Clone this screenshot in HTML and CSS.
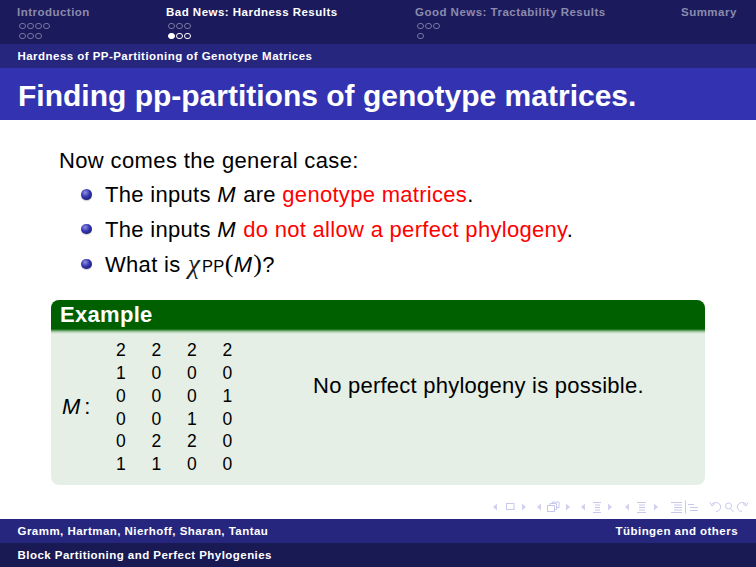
FILE: index.html
```html
<!DOCTYPE html>
<html lang="en">
<head>
<meta charset="utf-8">
<title>Finding pp-partitions of genotype matrices</title>
<link rel="stylesheet" href="styles.css">
</head>
<body>
<div class="slide">
  <header class="nav">
    <div class="sec sec-a dim">
      <div class="sec-name">Introduction</div>
      <div class="dots"><i></i><i></i><i></i><i></i></div>
      <div class="dots"><i></i><i></i><i></i></div>
    </div>
    <div class="sec sec-b">
      <div class="sec-name">Bad News: Hardness Results</div>
      <div class="dots faint"><i></i><i></i><i></i></div>
      <div class="dots"><i class="on"></i><i></i><i></i></div>
    </div>
    <div class="sec sec-c dim">
      <div class="sec-name">Good News: Tractability Results</div>
      <div class="dots"><i></i><i></i><i></i></div>
      <div class="dots"><i></i></div>
    </div>
    <div class="sec dim">
      <div class="sec-name">Summary</div>
    </div>
  </header>
  <div class="subsection">Hardness of PP-Partitioning of Genotype Matrices</div>
  <h1 class="title">Finding pp-partitions of genotype matrices.</h1>
  <main class="content">
    <p class="lead">Now comes the general case:</p>
    <ul class="items">
      <li><span class="ball"></span><span>The inputs <em>M</em> are <span class="red">genotype matrices</span>.</span></li>
      <li><span class="ball"></span><span>The inputs <em>M</em> <span class="red">do not allow a perfect phylogeny</span>.</span></li>
      <li><span class="ball"></span><span class="formula-line">What is <span class="chi">χ</span><span class="sub">PP</span><span class="paren">(</span><em>M</em><span class="paren">)</span>?</span></li>
    </ul>
    <section class="block">
      <div class="block-head">Example</div>
      <div class="block-body">
        <div class="matrix-wrap">
          <span class="m-label"><em>M</em><span class="colon">:</span></span>
          <div class="matrix">
            <span>2</span><span>2</span><span>2</span><span>2</span>
            <span>1</span><span>0</span><span>0</span><span>0</span>
            <span>0</span><span>0</span><span>0</span><span>1</span>
            <span>0</span><span>0</span><span>1</span><span>0</span>
            <span>0</span><span>2</span><span>2</span><span>0</span>
            <span>1</span><span>1</span><span>0</span><span>0</span>
          </div>
        </div>
        <p class="note">No perfect phylogeny is possible.</p>
      </div>
    </section>
    <div class="beamer-nav">
      <svg class="nav-icons" width="262" height="14" viewBox="490 500 262 14" aria-hidden="true">
        <g class="ic-fill">
          <path d="M493 507l4-3.500v7z"/><path d="M522 503.500l4 3.500-4 3.500z"/>
          <path d="M537 507l4-3.500v7z"/><path d="M566 503.500l4 3.500-4 3.500z"/>
          <path d="M581 507l4-3.500v7z"/><path d="M608 503.500l4 3.500-4 3.500z"/>
          <path d="M625 507l4-3.500v7z"/><path d="M654 503.500l4 3.500-4 3.500z"/>
        </g>
        <g class="ic-line">
          <rect x="506.500" y="503.500" width="7.500" height="6"/>
          <rect x="547.500" y="505.500" width="7" height="6"/>
          <path d="M550 505.500v-2h6.500v6h-2"/>
          <path d="M552.500 503.500v-1.500h6.500v5.500h-2.500"/>
          <path d="M593 502.500h8M595 505h5M595 507.500h5M595 510h5M593 512.500h8"/>
          <path d="M637 502.500h9M639 505h6M639 507.500h6M639 510h6M637 512.500h9"/>
          <path d="M671 502.500h11M674 505h8M674 507.500h8M674 510h8M671 512.500h11"/>
          <path d="M685.500 500.500v13"/>
          <path d="M688 504.500h6M690 507.500h8M690 510.500h8"/>
          <path d="M712 504a5 4.500 0 1 1 4 7.500M710 502.500l2 3.500 3-2.500"/>
          <circle cx="728.500" cy="506" r="3"/>
          <path d="M730.500 508.500l3 3.500"/>
          <path d="M746 504a5 4.500 0 1 0-4 7.500M748 502.500l-2 3.500-3-2.500"/>
        </g>
      </svg>
    </div>
  </main>
  <footer class="foot">
    <div class="foot-top"><span>Gramm, Hartman, Nierhoff, Sharan, Tantau</span><span>Tübingen and others</span></div>
    <div class="foot-bottom">Block Partitioning and Perfect Phylogenies</div>
  </footer>
</div>
</body>
</html>
```
FILE: styles.css
```css
* { box-sizing: border-box; }
html, body { margin: 0; padding: 0; background: #fff; }
body { font-family: "Liberation Sans", Arial, sans-serif; color: #000; }
.slide { width: 756px; height: 567px; display: flex; flex-direction: column; overflow: hidden; }

.nav { height: 44px; background: #1b1a5c; display: flex; padding: 5px 0 0 17px; color: #fff; flex: none; }
.sec { font-size: 11.500px; font-weight: bold; letter-spacing: .48px; }
.sec-a { width: 149px; }
.sec-b { width: 249px; }
.sec-c { width: 266px; }
.sec-name { line-height: 14px; height: 16px; }
.dim { color: #8b8bad; }
.dots { display: flex; gap: 1.500px; height: 10px; align-items: center; padding-left: 2px; }
.dots i { width: 6.500px; height: 6.500px; border: 1px solid #76769f; border-radius: 50%; }
.sec-b .dots i { border-color: #fff; }
.sec-b .dots.faint i { border-color: #76769f; }
.dots i.on { background: #fff; }

.subsection { height: 24px; flex: none; background: #26267f; color: #fff; font-size: 11.500px; font-weight: bold; letter-spacing: .46px; line-height: 24px; padding-left: 17.500px; }
.title { margin: 0; height: 52px; flex: none; background: #3333b2; color: #fff; font-size: 30px; font-weight: bold; line-height: 56px; padding-left: 18px; }

.content { flex: 1; min-height: 0; padding: 28px 51px 0; display: flex; flex-direction: column; }
.lead { margin: 0 0 0 8px; font-size: 22px; line-height: 25px; letter-spacing: .37px; }
.items { list-style: none; margin: 9px 0 0; padding: 0 0 0 30px; font-size: 22px; letter-spacing: .3px; line-height: 25px; display: flex; flex-direction: column; gap: 9.500px; }
.items li { display: flex; align-items: center; gap: 13.500px; height: 25px; }
.items li:last-child { padding-top: 1px; }
.formula-line { margin-top: 2px; }
.items em { margin-right: 1px; }
.ball { width: 10.500px; height: 10.500px; border-radius: 50%; flex: none; background: radial-gradient(circle at 38% 32%, #8f8fdc 0, #3333b2 45%, #14143f 100%); box-shadow: 0 1px 1px rgba(0,0,0,.2); }
.red { color: #f00; }
.chi { font-family: "Liberation Serif", serif; font-style: italic; font-size: 27px; line-height: 20px; vertical-align: -1px; color: #222; margin: 0 2px 0 1px; }
.sub { font-size: 16.500px; }
.paren { font-family: "Liberation Serif", serif; font-size: 26px; line-height: 20px; }

.block { margin-top: 24px; height: 185px; border-radius: 8px; overflow: hidden; background: #e5efe5; display: flex; flex-direction: column; flex: none; }
.block-head { height: 34px; flex: none; background: linear-gradient(#006000 0, #006000 29px, #3f8f3f 30px, #b8d2b8 32px, #e5efe5 34px); color: #fff; font-size: 22px; font-weight: bold; letter-spacing: .3px; line-height: 29px; padding-left: 9px; }
.block-body { flex: 1; display: flex; align-items: flex-start; }
.matrix-wrap { display: flex; align-items: center; padding-left: 11px; width: 262px; height: 147px; }
.m-label { font-size: 22px; width: 37px; flex: none; line-height: 24px; margin-top: -2px; }
.colon { margin-left: 4px; }
.matrix { display: grid; grid-template-columns: repeat(4, 35.500px); grid-auto-rows: 22.700px; font-size: 17.500px; line-height: 22.700px; text-align: center; margin-left: 4px; }
.note { margin: 39px 0 0; font-size: 22px; line-height: 25px; letter-spacing: .24px; }

.beamer-nav { margin-top: 15px; display: flex; justify-content: flex-end; margin-right: -51px; padding-right: 4px; height: 14px; flex: none; overflow: hidden; }
.nav-icons { display: block; }
.ic-fill { fill: #d2d2f0; }
.ic-line { fill: none; stroke: #c8c8ee; stroke-width: 1; }

.foot { flex: none; color: #fff; font-size: 11.500px; font-weight: bold; letter-spacing: .46px; }
.foot-top { height: 24px; background: #26267f; display: flex; justify-content: space-between; align-items: center; padding: 0 18px 0 17.500px; }
.foot-bottom { height: 24px; background: #191954; line-height: 24px; padding-left: 17.500px; }
```
